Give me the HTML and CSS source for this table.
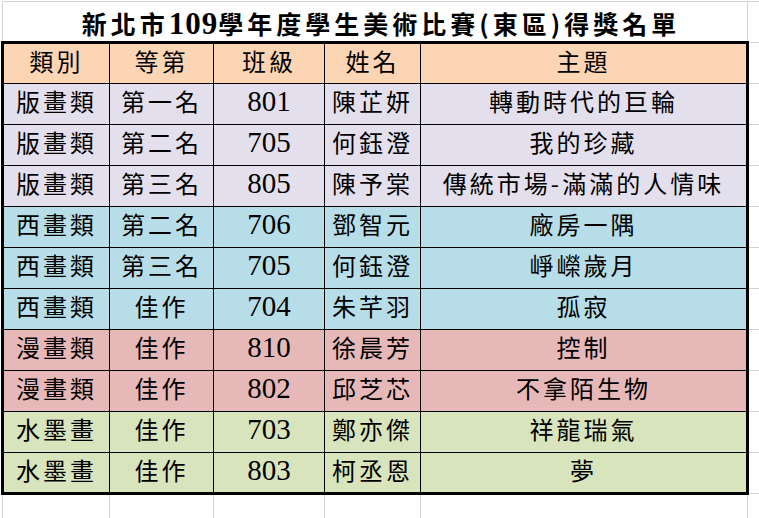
FILE: index.html
```html
<!DOCTYPE html>
<html lang="zh-Hant">
<head>
<meta charset="utf-8">
<title>新北市109學年度學生美術比賽(東區)得獎名單</title>
<link rel="stylesheet" href="styles.css">
</head>
<body>
<table class="sheet">
  <colgroup>
    <col class="c-a"><col class="c-b"><col class="c-c"><col class="c-d"><col class="c-e"><col class="c-f">
  </colgroup>
  <tr class="title-row">
    <td colspan="5" class="title">新北市<span class="num">109</span>學年度學生美術比賽(東區)得獎名單</td>
    <td class="blank"></td>
  </tr>
  <tr class="hdr">
    <td>類別</td><td>等第</td><td>班級</td><td>姓名</td><td>主題</td><td class="blank"></td>
  </tr>
  <tr class="print">
    <td>版畫類</td><td>第一名</td><td class="num">801</td><td>陳芷妍</td><td>轉動時代的巨輪</td><td class="blank"></td>
  </tr>
  <tr class="print">
    <td>版畫類</td><td>第二名</td><td class="num">705</td><td>何鈺澄</td><td>我的珍藏</td><td class="blank"></td>
  </tr>
  <tr class="print">
    <td>版畫類</td><td>第三名</td><td class="num">805</td><td>陳予棠</td><td>傳統市場-滿滿的人情味</td><td class="blank"></td>
  </tr>
  <tr class="west">
    <td>西畫類</td><td>第二名</td><td class="num">706</td><td>鄧智元</td><td>廠房一隅</td><td class="blank"></td>
  </tr>
  <tr class="west">
    <td>西畫類</td><td>第三名</td><td class="num">705</td><td>何鈺澄</td><td>崢嶸歲月</td><td class="blank"></td>
  </tr>
  <tr class="west">
    <td>西畫類</td><td>佳作</td><td class="num">704</td><td>朱芊羽</td><td>孤寂</td><td class="blank"></td>
  </tr>
  <tr class="comic">
    <td>漫畫類</td><td>佳作</td><td class="num">810</td><td>徐晨芳</td><td>控制</td><td class="blank"></td>
  </tr>
  <tr class="comic">
    <td>漫畫類</td><td>佳作</td><td class="num">802</td><td>邱芝芯</td><td>不拿陌生物</td><td class="blank"></td>
  </tr>
  <tr class="ink">
    <td>水墨畫</td><td>佳作</td><td class="num">703</td><td>鄭亦傑</td><td>祥龍瑞氣</td><td class="blank"></td>
  </tr>
  <tr class="ink last">
    <td>水墨畫</td><td>佳作</td><td class="num">803</td><td>柯丞恩</td><td>夢</td><td class="blank"></td>
  </tr>
  <tr class="empty-row">
    <td class="blank"></td><td class="blank"></td><td class="blank"></td><td class="blank"></td><td class="blank"></td><td class="blank"></td>
  </tr>
</table>
</body>
</html>
```
FILE: styles.css
```css
html, body {
  margin: 0;
  padding: 0;
  background: #ffffff;
  overflow: hidden;
}

.sheet {
  border-collapse: collapse;
  table-layout: fixed;
  width: 785px;
  margin: 1px 0 0 1px;
  font-family: "Noto Sans CJK TC", "Noto Sans CJK SC", sans-serif;
  color: #000;
}

.c-a { width: 107px; }
.c-b { width: 104px; }
.c-c { width: 111px; }
.c-d { width: 96px; }
.c-e { width: 327px; }
.c-f { width: 40px; }

.sheet td {
  height: 41px;
  padding: 0 0 6px 0;
  box-sizing: border-box;
  text-align: center;
  vertical-align: middle;
  font-size: 24px;
  letter-spacing: 3px;
  line-height: 30px;
  border: 1px solid #000;
  white-space: nowrap;
}

.sheet td.num {
  font-family: "Liberation Serif", serif;
  font-size: 29px;
  letter-spacing: 0;
}

.sheet td.blank {
  border: 1px solid #d4d4d4;
  background: #fff;
}

.title-row td.title {
  border: 1px solid #d4d4d4;
  font-weight: bold;
  font-size: 25px;
  letter-spacing: 4px;
  padding: 4px 0 0 12px;
}

.title .num {
  font-family: "Liberation Serif", serif;
  font-size: 31px;
  letter-spacing: 1px;
}

.hdr td { background: #fcd5b4; }
.print td { background: #e4dfec; }
.west td { background: #b7dee8; }
.comic td { background: #e6b8b7; }
.ink td { background: #d8e4bc; }

.hdr td:first-child,
.print td:first-child,
.west td:first-child,
.comic td:first-child,
.ink td:first-child {
  border-left: 3px solid #000;
}

.hdr td:nth-child(5),
.print td:nth-child(5),
.west td:nth-child(5),
.comic td:nth-child(5),
.ink td:nth-child(5) {
  border-right: 3px solid #000;
}

.hdr td:not(.blank) {
  border-top: 3px solid #000;
}

.ink.last td:not(.blank) {
  border-bottom: 3px solid #000;
}
```
